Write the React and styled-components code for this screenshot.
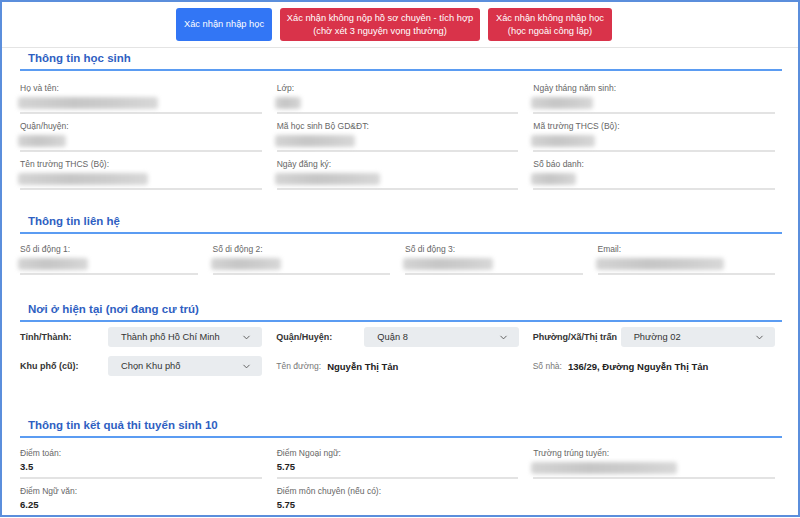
import React from 'react';
import styled, { createGlobalStyle } from 'styled-components';
import { ChevronDown } from 'lucide-react';

const GlobalStyle = createGlobalStyle`
  html, body {
    margin: 0;
    padding: 0;
    background: #fff;
  }
  body {
    font-family: "Liberation Sans", Arial, sans-serif;
  }
`;

const Frame = styled.div`
  box-sizing: border-box;
  width: 800px;
  height: 517px;
  border: 2px solid #5b8edc;
  overflow: hidden;
  background: #fff;
`;

const ButtonBar = styled.div`
  display: flex;
  justify-content: center;
  gap: 8px;
  padding: 6px 12px 6px 0;
  border-bottom: 1px solid #e4e4e4;
`;

const ActionButton = styled.div`
  box-sizing: border-box;
  height: 33px;
  width: ${({ w }) => w}px;
  display: flex;
  align-items: center;
  justify-content: center;
  text-align: center;
  border-radius: 3px;
  background: ${({ danger }) => (danger ? '#d9334a' : '#3276f5')};
  color: #fff;
  font-size: 9.3px;
  line-height: 13px;
`;

const Section = styled.section`
  padding: 0 16px 0 18px;
  margin-top: ${({ top }) => top}px;
`;

const Heading = styled.h2`
  margin: 0;
  padding: 0 0 3px 8px;
  border-bottom: 2px solid #5b9cf2;
  font-size: 11.5px;
  line-height: 15px;
  font-weight: bold;
  color: #2f5fc2;
`;

const Grid = styled.div`
  display: grid;
  grid-template-columns: repeat(${({ cols }) => cols}, 1fr);
  column-gap: 15px;
  row-gap: 7px;
  padding-right: 7px;
  margin-top: ${({ top }) => top}px;
`;

const Field = styled.div`
  border-bottom: 2px solid #e3e3e3;
  padding-bottom: 2px;
`;

const Label = styled.div`
  font-size: 8.5px;
  line-height: 11px;
  color: #666;
`;

const ValueSlot = styled.div`
  height: 15px;
  margin-top: 1px;
  display: flex;
  align-items: center;
`;

const Score = styled.div`
  font-size: 9.5px;
  line-height: 14px;
  font-weight: bold;
  color: #222;
  margin: 1px 0 1px;
`;

const Blur = styled.span`
  display: block;
  width: ${({ w }) => w}px;
  height: 12px;
  margin-left: -2px;
  border-radius: 3px;
  background: linear-gradient(90deg, #d4d4d4, #c6c6c6 40%, #cdcdcd 70%, #d8d8d8);
  filter: blur(2px);
`;

const AddressGrid = styled.div`
  display: grid;
  grid-template-columns: repeat(3, 1fr);
  column-gap: 14px;
  row-gap: 9px;
  padding-right: 7px;
  margin-top: 5px;
`;

const AddressCell = styled.div`
  display: flex;
  align-items: center;
  height: 20px;
`;

const FieldName = styled.div`
  width: 88px;
  flex: none;
  font-size: 9px;
  font-weight: bold;
  color: #333;
`;

const SelectBox = styled.div`
  flex: 1;
  height: 20px;
  box-sizing: border-box;
  display: flex;
  align-items: center;
  justify-content: space-between;
  padding: 0 10px 0 13px;
  border-radius: 3px;
  background: #e9ecef;
  font-size: 9.3px;
  color: #333;
  svg {
    color: #555;
  }
`;

const InlineLabel = styled.span`
  font-size: 8.5px;
  color: #777;
  margin-right: 6px;
`;

const InlineValue = styled.span`
  font-size: 9.5px;
  font-weight: bold;
  color: #222;
`;

const Select = ({ children }) => (
  <SelectBox>
    <span>{children}</span>
    <ChevronDown size={11} strokeWidth={2} />
  </SelectBox>
);

const BlurField = ({ label, w }) => (
  <Field>
    <Label>{label}</Label>
    <ValueSlot>
      <Blur w={w} />
    </ValueSlot>
  </Field>
);

const ScoreField = ({ label, value }) => (
  <Field>
    <Label>{label}</Label>
    <Score>{value}</Score>
  </Field>
);

const student = [
  ['Họ và tên:', 140],
  ['Lớp:', 26],
  ['Ngày tháng năm sinh:', 62],
  ['Quận/huyện:', 48],
  ['Mã học sinh Bộ GD&ĐT:', 80],
  ['Mã trường THCS (Bộ):', 64],
  ['Tên trường THCS (Bộ):', 130],
  ['Ngày đăng ký:', 105],
  ['Số báo danh:', 45],
];

const contact = [
  ['Số di động 1:', 70],
  ['Số di động 2:', 70],
  ['Số di động 3:', 90],
  ['Email:', 128],
];

export default function App() {
  return (
    <>
      <GlobalStyle />
      <Frame>
        <ButtonBar>
          <ActionButton w={96}>Xác nhận nhập học</ActionButton>
          <ActionButton w={200} danger>
            Xác nhận không nộp hồ sơ chuyên - tích hợp
            <br />
            (chờ xét 3 nguyện vọng thường)
          </ActionButton>
          <ActionButton w={124} danger>
            Xác nhận không nhập học
            <br />
            (học ngoài công lập)
          </ActionButton>
        </ButtonBar>

        <Section top={3}>
          <Heading>Thông tin học sinh</Heading>
          <Grid cols={3} top={12}>
            {student.map(([label, w]) => (
              <BlurField key={label} label={label} w={w} />
            ))}
          </Grid>
        </Section>

        <Section top={24}>
          <Heading>Thông tin liên hệ</Heading>
          <Grid cols={4} top={10}>
            {contact.map(([label, w]) => (
              <BlurField key={label} label={label} w={w} />
            ))}
          </Grid>
        </Section>

        <Section top={27}>
          <Heading>Nơi ở hiện tại (nơi đang cư trú)</Heading>
          <AddressGrid>
            <AddressCell>
              <FieldName>Tỉnh/Thành:</FieldName>
              <Select>Thành phố Hồ Chí Minh</Select>
            </AddressCell>
            <AddressCell>
              <FieldName>Quận/Huyện:</FieldName>
              <Select>Quận 8</Select>
            </AddressCell>
            <AddressCell>
              <FieldName>Phường/Xã/Thị trấn</FieldName>
              <Select>Phường 02</Select>
            </AddressCell>
            <AddressCell>
              <FieldName>Khu phố (cũ):</FieldName>
              <Select>Chọn Khu phố</Select>
            </AddressCell>
            <AddressCell>
              <InlineLabel>Tên đường:</InlineLabel>
              <InlineValue>Nguyễn Thị Tản</InlineValue>
            </AddressCell>
            <AddressCell>
              <InlineLabel>Số nhà:</InlineLabel>
              <InlineValue>136/29, Đường Nguyễn Thị Tản</InlineValue>
            </AddressCell>
          </AddressGrid>
        </Section>

        <Section top={42}>
          <Heading>Thông tin kết quả thi tuyển sinh 10</Heading>
          <Grid cols={3} top={10}>
            <ScoreField label="Điểm toán:" value="3.5" />
            <ScoreField label="Điểm Ngoại ngữ:" value="5.75" />
            <BlurField label="Trường trúng tuyển:" w={146} />
            <ScoreField label="Điểm Ngữ văn:" value="6.25" />
            <ScoreField label="Điểm môn chuyên (nếu có):" value="5.75" />
          </Grid>
        </Section>
      </Frame>
    </>
  );
}
